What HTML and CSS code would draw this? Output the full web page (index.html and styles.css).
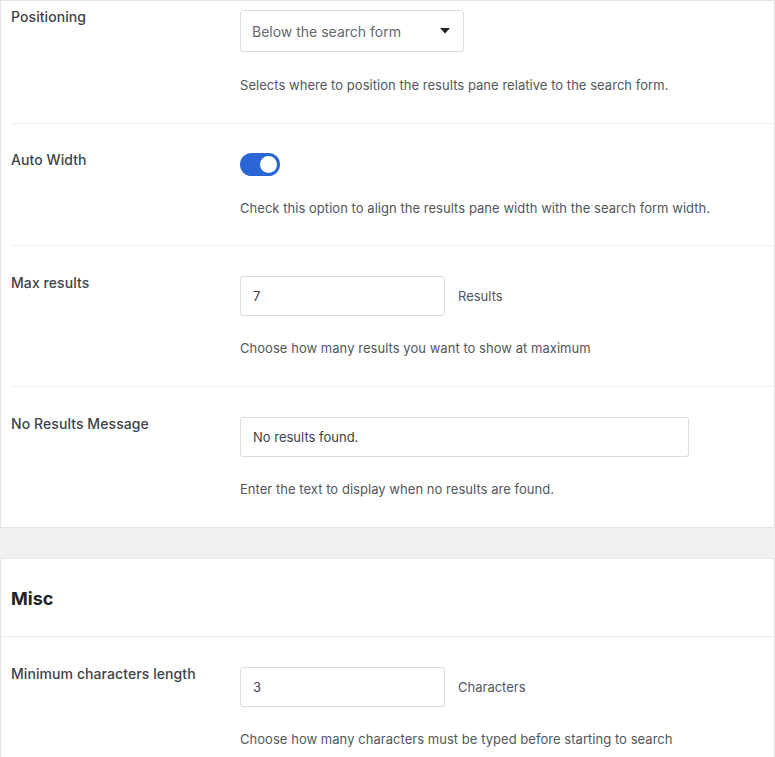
FILE: index.html
```html
<!DOCTYPE html>
<html lang="en">
<head>
<meta charset="utf-8">
<title>Settings</title>
<link rel="stylesheet" href="styles.css">
</head>
<body>
<section class="panel">
  <div class="row row-first">
    <div class="label">Positioning</div>
    <div class="field">
      <div class="control">
        <div class="select">
          <span>Below the search form</span>
          <svg class="caret" width="10" height="6" viewBox="0 0 10 6"><path d="M0 0h10L5 5.5z" fill="#1d2327"/></svg>
        </div>
      </div>
      <p class="desc">Selects where to position the results pane relative to the search form.</p>
    </div>
  </div>
  <div class="row row-toggle">
    <div class="label">Auto Width</div>
    <div class="field">
      <div class="control">
        <span class="toggle"><span class="knob"></span></span>
      </div>
      <p class="desc">Check this option to align the results pane width with the search form width.</p>
    </div>
  </div>
  <div class="row">
    <div class="label">Max results</div>
    <div class="field">
      <div class="control">
        <div class="input input-sm">7</div>
        <span class="unit">Results</span>
      </div>
      <p class="desc">Choose how many results you want to show at maximum</p>
    </div>
  </div>
  <div class="row row-last">
    <div class="label">No Results Message</div>
    <div class="field">
      <div class="control">
        <div class="input input-lg">No results found.</div>
      </div>
      <p class="desc">Enter the text to display when no results are found.</p>
    </div>
  </div>
</section>
<div class="gap"></div>
<section class="panel">
  <h2 class="panel-title">Misc</h2>
  <div class="row row-last">
    <div class="label">Minimum characters length</div>
    <div class="field">
      <div class="control">
        <div class="input input-sm">3</div>
        <span class="unit">Characters</span>
      </div>
      <p class="desc">Choose how many characters must be typed before starting to search</p>
    </div>
  </div>
</section>
</body>
</html>
```
FILE: styles.css
```css
html, body {
  margin: 0;
  padding: 0;
}
body {
  background: #f0f0f1;
  font-family: Inter, "Noto Sans", sans-serif;
  color: #50575e;
  width: 775px;
}
.panel {
  background: #fff;
  border: 1px solid #e4e4e7;
}
.gap {
  height: 30px;
}
.panel-title {
  margin: 0;
  padding: 28px 11px 25px 10px;
  font-size: 18px;
  line-height: 24px;
  font-weight: 700;
  color: #1d2327;
  border-bottom: 1px solid #ececee;
}
.row {
  display: grid;
  grid-template-columns: 229px 1fr;
  margin-left: 10px;
  padding: 30px 0 28px;
  border-bottom: 1px solid #f0f0f1;
}
.row-first {
  padding-top: 9px;
}
.row-first .desc {
  margin-top: 23px;
}
.row-toggle {
  padding: 29px 0 27px;
}
.row-last {
  border-bottom: none;
}
.label {
  font-size: 14px;
  line-height: 20px;
  font-weight: 500;
  letter-spacing: 0.08px;
  color: #3c434a;
  margin-top: -3px;
}
.field {
  display: flex;
  flex-direction: column;
}
.control {
  display: flex;
  align-items: center;
  gap: 13px;
}
.select {
  box-sizing: border-box;
  width: 224px;
  height: 42px;
  border: 1px solid #dcdcde;
  border-radius: 3px;
  display: flex;
  align-items: center;
  justify-content: space-between;
  padding: 0 13px 0 11px;
  font-size: 14px;
  color: #646970;
}
.toggle {
  position: relative;
  display: block;
  width: 40px;
  height: 23px;
  border-radius: 12px;
  background: #2b66d6;
}
.knob {
  position: absolute;
  top: 3px;
  right: 3px;
  width: 17px;
  height: 17px;
  border-radius: 50%;
  background: #fff;
}
.input {
  box-sizing: border-box;
  height: 40px;
  border: 1px solid #dcdcde;
  border-radius: 3px;
  display: flex;
  align-items: center;
  padding: 0 12px;
  font-size: 13px;
  color: #3c434a;
}
.input-sm {
  width: 205px;
}
.input-lg {
  width: 449px;
}
.unit {
  font-size: 13px;
  color: #50575e;
}
.desc {
  margin: 22px 0 0;
  font-size: 13px;
  line-height: 20px;
  letter-spacing: 0.04px;
  color: #50575e;
}
```
